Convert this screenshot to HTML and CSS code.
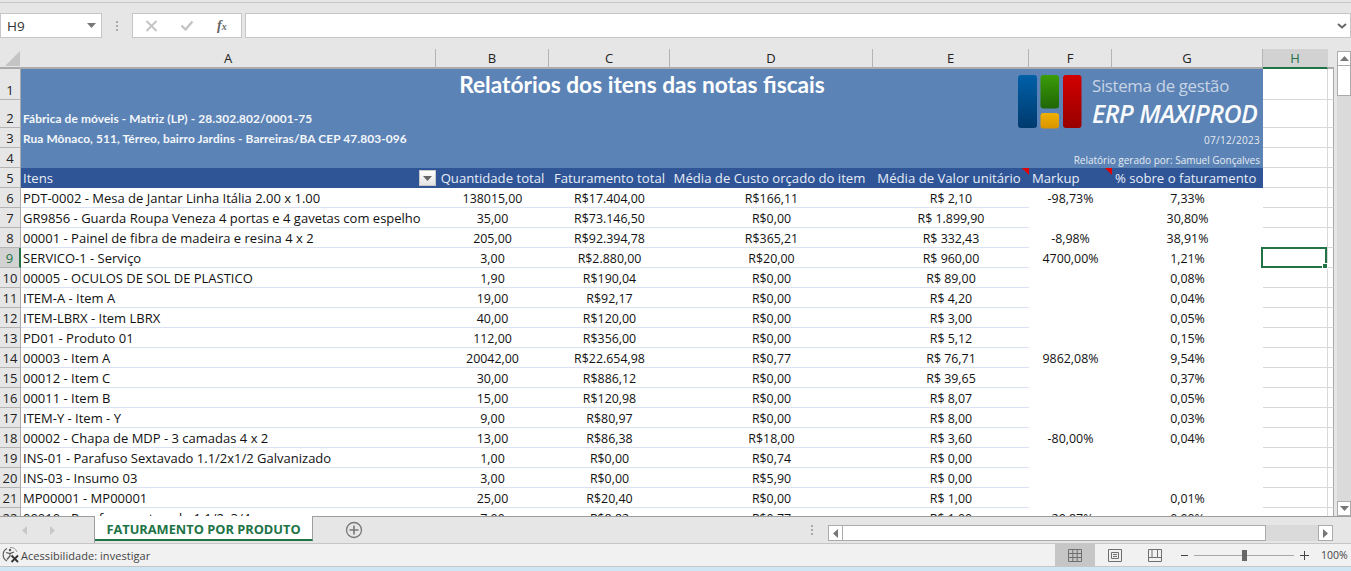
FILE: index.html
```html
<!DOCTYPE html>
<html lang="pt-BR">
<head>
<meta charset="utf-8">
<title>Relatórios dos itens das notas fiscais</title>
<link rel="stylesheet" href="styles.css">
</head>
<body>
<div class="app">
  <div class="ribbon-edge"></div>
  <div class="formula-bar">
    <div class="name-box"><span>H9</span><svg width="9" height="5" viewBox="0 0 9 5"><path d="M0 0h9L4.500 5z" fill="#777"/></svg></div>
    <div class="grip"><i></i><i></i><i></i></div>
    <div class="fx-box">
      <svg class="fx-x" width="13" height="12" viewBox="0 0 13 12"><path d="M1.500 1l10 10M11.500 1l-10 10" stroke="#c4c4c4" stroke-width="2" fill="none"/></svg>
      <svg class="fx-ok" width="14" height="11" viewBox="0 0 14 11"><path d="M1.500 5.500l4 4 7-8" stroke="#c4c4c4" stroke-width="2.400" fill="none"/></svg>
      <span class="fx-label">f<small>x</small></span>
    </div>
    <div class="formula-input"><svg width="10" height="6" viewBox="0 0 10 6"><path d="M1 1l4 3.500L9 1" stroke="#666" stroke-width="2" fill="none"/></svg></div>
  </div>

  <div class="sheet-row">
    <div class="grid-clip">
      <table class="grid">
        <colgroup>
          <col class="c-row"><col class="c-a"><col class="c-b"><col class="c-c"><col class="c-d"><col class="c-e"><col class="c-f"><col class="c-g"><col class="c-h"><col class="c-i">
        </colgroup>
        <thead>
          <tr class="r-head">
            <th class="corner"><svg width="18" height="18" viewBox="0 0 18 18"><path d="M17 2v15H2z" fill="#c4c4c4"/></svg></th>
            <th class="col">A</th><th class="col">B</th><th class="col">C</th><th class="col">D</th><th class="col">E</th><th class="col">F</th><th class="col">G</th><th class="col col-sel">H</th><th class="col col-i"></th>
          </tr>
        </thead>
        <tbody>
          <tr class="r1">
            <th class="row">1</th>
            <td class="banner title" colspan="7">Relatórios dos itens das notas fiscais
              <div class="logo">
                <svg width="64" height="54" viewBox="0 0 64 54">
                  <defs>
                    <linearGradient id="gb" x1="0" y1="0" x2="0" y2="1"><stop offset="0" stop-color="#0060a8"/><stop offset="1" stop-color="#003a6e"/></linearGradient>
                    <linearGradient id="gg" x1="0" y1="0" x2="0" y2="1"><stop offset="0" stop-color="#3c9c08"/><stop offset="1" stop-color="#1f6606"/></linearGradient>
                    <linearGradient id="gy" x1="0" y1="0" x2="0" y2="1"><stop offset="0" stop-color="#f0b000"/><stop offset="1" stop-color="#d89400"/></linearGradient>
                    <linearGradient id="gr" x1="0" y1="0" x2="0" y2="1"><stop offset="0" stop-color="#d20000"/><stop offset="1" stop-color="#980000"/></linearGradient>
                  </defs>
                  <rect x="0" y="0" width="19" height="53" rx="3" fill="url(#gb)"/>
                  <rect x="22.500" y="0" width="18.500" height="33.500" rx="3" fill="url(#gg)"/>
                  <rect x="22.500" y="38" width="18.500" height="15.500" rx="3" fill="url(#gy)"/>
                  <rect x="45" y="0" width="18.500" height="53" rx="3" fill="url(#gr)"/>
                </svg>
                <div class="logo-text"><span class="logo-top">Sistema de gestão</span><span class="logo-main">ERP MAXIPROD</span></div>
              </div>
            </td>
            <td class="h"></td><td class="i"></td>
          </tr>
          <tr class="r2">
            <th class="row">2</th>
            <td class="banner company" colspan="7">Fábrica de móveis - Matriz (LP) - 28.302.802/0001-75</td>
            <td class="h"></td><td class="i"></td>
          </tr>
          <tr class="r">
            <th class="row">3</th>
            <td class="banner company" colspan="5">Rua Mônaco, 511, Térreo, bairro Jardins - Barreiras/BA CEP 47.803-096</td>
            <td class="banner small date" colspan="2">07/12/2023</td>
            <td class="h"></td><td class="i"></td>
          </tr>
          <tr class="r">
            <th class="row">4</th>
            <td class="banner" colspan="5"></td>
            <td class="banner small" colspan="2">Relatório gerado por: Samuel Gonçalves</td>
            <td class="h"></td><td class="i"></td>
          </tr>
          <tr class="r">
            <th class="row">5</th>
            <td class="hd hd-a">Itens<span class="filter"><svg width="9" height="5" viewBox="0 0 9 5"><path d="M0 0h9L4.500 5z" fill="#666"/></svg></span></td>
            <td class="hd">Quantidade total</td>
            <td class="hd">Faturamento total</td>
            <td class="hd hd-off">Média de Custo orçado do item</td>
            <td class="hd hd-off">Média de Valor unitário<i class="note"></i></td>
            <td class="hd hd-l">Markup<i class="note"></i></td>
            <td class="hd hd-l">% sobre o faturamento</td>
            <td class="h"></td><td class="i"></td>
          </tr>
          <tr class="r"><th class="row">6</th><td class="t">PDT-0002 - Mesa de Jantar Linha Itália 2.00 x 1.00</td><td class="n">138015,00</td><td class="n">R$17.404,00</td><td class="n">R$166,11</td><td class="n">R$ 2,10</td><td class="p">-98,73%</td><td class="p">7,33%</td><td class="h"></td><td class="i"></td></tr>
          <tr class="r"><th class="row">7</th><td class="t">GR9856 - Guarda Roupa Veneza 4 portas e 4 gavetas com espelho</td><td class="n">35,00</td><td class="n">R$73.146,50</td><td class="n">R$0,00</td><td class="n">R$ 1.899,90</td><td class="p"></td><td class="p">30,80%</td><td class="h"></td><td class="i"></td></tr>
          <tr class="r"><th class="row">8</th><td class="t">00001 - Painel de fibra de madeira e resina 4 x 2</td><td class="n">205,00</td><td class="n">R$92.394,78</td><td class="n">R$365,21</td><td class="n">R$ 332,43</td><td class="p">-8,98%</td><td class="p">38,91%</td><td class="h"></td><td class="i"></td></tr>
          <tr class="r"><th class="row row-sel">9</th><td class="t">SERVICO-1 - Serviço</td><td class="n">3,00</td><td class="n">R$2.880,00</td><td class="n">R$20,00</td><td class="n">R$ 960,00</td><td class="p">4700,00%</td><td class="p">1,21%</td><td class="h active"><div class="selection"><i></i></div></td><td class="i"></td></tr>
          <tr class="r"><th class="row">10</th><td class="t">00005 - OCULOS DE SOL DE PLASTICO</td><td class="n">1,90</td><td class="n">R$190,04</td><td class="n">R$0,00</td><td class="n">R$ 89,00</td><td class="p"></td><td class="p">0,08%</td><td class="h"></td><td class="i"></td></tr>
          <tr class="r"><th class="row">11</th><td class="t">ITEM-A - Item A</td><td class="n">19,00</td><td class="n">R$92,17</td><td class="n">R$0,00</td><td class="n">R$ 4,20</td><td class="p"></td><td class="p">0,04%</td><td class="h"></td><td class="i"></td></tr>
          <tr class="r"><th class="row">12</th><td class="t">ITEM-LBRX - Item LBRX</td><td class="n">40,00</td><td class="n">R$120,00</td><td class="n">R$0,00</td><td class="n">R$ 3,00</td><td class="p"></td><td class="p">0,05%</td><td class="h"></td><td class="i"></td></tr>
          <tr class="r"><th class="row">13</th><td class="t">PD01 - Produto 01</td><td class="n">112,00</td><td class="n">R$356,00</td><td class="n">R$0,00</td><td class="n">R$ 5,12</td><td class="p"></td><td class="p">0,15%</td><td class="h"></td><td class="i"></td></tr>
          <tr class="r"><th class="row">14</th><td class="t">00003 - Item A</td><td class="n">20042,00</td><td class="n">R$22.654,98</td><td class="n">R$0,77</td><td class="n">R$ 76,71</td><td class="p">9862,08%</td><td class="p">9,54%</td><td class="h"></td><td class="i"></td></tr>
          <tr class="r"><th class="row">15</th><td class="t">00012 - Item C</td><td class="n">30,00</td><td class="n">R$886,12</td><td class="n">R$0,00</td><td class="n">R$ 39,65</td><td class="p"></td><td class="p">0,37%</td><td class="h"></td><td class="i"></td></tr>
          <tr class="r"><th class="row">16</th><td class="t">00011 - Item B</td><td class="n">15,00</td><td class="n">R$120,98</td><td class="n">R$0,00</td><td class="n">R$ 8,07</td><td class="p"></td><td class="p">0,05%</td><td class="h"></td><td class="i"></td></tr>
          <tr class="r"><th class="row">17</th><td class="t">ITEM-Y - Item - Y</td><td class="n">9,00</td><td class="n">R$80,97</td><td class="n">R$0,00</td><td class="n">R$ 8,00</td><td class="p"></td><td class="p">0,03%</td><td class="h"></td><td class="i"></td></tr>
          <tr class="r"><th class="row">18</th><td class="t">00002 - Chapa de MDP - 3 camadas 4 x 2</td><td class="n">13,00</td><td class="n">R$86,38</td><td class="n">R$18,00</td><td class="n">R$ 3,60</td><td class="p">-80,00%</td><td class="p">0,04%</td><td class="h"></td><td class="i"></td></tr>
          <tr class="r"><th class="row">19</th><td class="t">INS-01 - Parafuso Sextavado 1.1/2x1/2 Galvanizado</td><td class="n">1,00</td><td class="n">R$0,00</td><td class="n">R$0,74</td><td class="n">R$ 0,00</td><td class="p"></td><td class="p"></td><td class="h"></td><td class="i"></td></tr>
          <tr class="r"><th class="row">20</th><td class="t">INS-03 - Insumo 03</td><td class="n">3,00</td><td class="n">R$0,00</td><td class="n">R$5,90</td><td class="n">R$ 0,00</td><td class="p"></td><td class="p"></td><td class="h"></td><td class="i"></td></tr>
          <tr class="r"><th class="row">21</th><td class="t">MP00001 - MP00001</td><td class="n">25,00</td><td class="n">R$20,40</td><td class="n">R$0,00</td><td class="n">R$ 1,00</td><td class="p"></td><td class="p">0,01%</td><td class="h"></td><td class="i"></td></tr>
          <tr class="r"><th class="row">22</th><td class="t">00010 - Parafuso sextavado 1.1/2x3/4</td><td class="n">7,00</td><td class="n">R$8,82</td><td class="n">R$0,77</td><td class="n">R$ 1,00</td><td class="p">-29,87%</td><td class="p">0,00%</td><td class="h"></td><td class="i"></td></tr>
        </tbody>
      </table>
    </div>
    <div class="vscroll">
      <div class="vbtn"><svg width="9" height="5" viewBox="0 0 9 5"><path d="M4.500 0L9 5H0z" fill="#777"/></svg></div>
      <div class="vthumb"></div>
      <div class="vtrack"></div>
      <div class="vbtn"><svg width="9" height="5" viewBox="0 0 9 5"><path d="M0 0h9L4.500 5z" fill="#777"/></svg></div>
    </div>
  </div>

  <div class="tabs">
    <div class="tab-nav">
      <svg width="5" height="9" viewBox="0 0 5 9"><path d="M5 0v9L0 4.500z" fill="#c8c8c8"/></svg>
      <svg width="5" height="9" viewBox="0 0 5 9"><path d="M0 0v9l5-4.500z" fill="#c8c8c8"/></svg>
    </div>
    <div class="tab">FATURAMENTO POR PRODUTO</div>
    <svg class="add" width="18" height="18" viewBox="0 0 18 18"><circle cx="9" cy="9" r="7.500" fill="none" stroke="#777" stroke-width="1.300"/><path d="M9 4.500v9M4.500 9h9" stroke="#777" stroke-width="1.600"/></svg>
    <div class="grip tab-grip"><i></i><i></i><i></i></div>
    <div class="hscroll">
      <div class="hbtn"><svg width="5" height="9" viewBox="0 0 5 9"><path d="M5 0v9L0 4.500z" fill="#777"/></svg></div>
      <div class="hthumb"></div>
      <div class="htrack"></div>
      <div class="hbtn"><svg width="5" height="9" viewBox="0 0 5 9"><path d="M0 0v9l5-4.500z" fill="#777"/></svg></div>
    </div>
  </div>

  <div class="status">
    <svg class="a11y" width="18" height="18" viewBox="0 0 18 18"><path d="M5 2.500A7 7 0 0 0 5 15" fill="none" stroke="#555" stroke-width="1.100"/><path d="M8 1.500A7 7 0 0 1 15 6" fill="none" stroke="#999" stroke-width="1"/><path d="M4 6.500l4 1 4-1.500M8 7.500v2.500l-3 3.500" fill="none" stroke="#555" stroke-width="1.200"/><circle cx="8" cy="4" r="1.200" fill="#555"/><path d="M9.500 9.500l6.500 6.500M16 9.500l-6.500 6.500" stroke="#333" stroke-width="1.800"/></svg>
    <span class="a11y-text">Acessibilidade: investigar</span>
    <div class="view active-view"><svg width="14" height="13" viewBox="0 0 14 13"><path d="M.5.500h13v12H.5zM.5 4.500h13M.5 8.500h13M4.800.500v12M9.200.500v12" fill="none" stroke="#6f6f6f"/></svg></div>
    <div class="view"><svg width="14" height="13" viewBox="0 0 14 13"><path d="M.5.500h13v12H.5z" fill="none" stroke="#6f6f6f"/><path d="M3.500 3.500h7v6h-7zM5 5.500h4M5 7.500h4" fill="none" stroke="#6f6f6f"/></svg></div>
    <div class="view"><svg width="14" height="13" viewBox="0 0 14 13"><path d="M.5.500h13v12H.5zM.5 8.500h3.500V.500M9.500.500v8h4M4 8.500h5.500" fill="none" stroke="#6f6f6f"/></svg></div>
    <div class="zoom">
      <span class="zoom-minus"></span>
      <div class="slider"><span class="knob"></span></div>
      <span class="zoom-plus"></span>
    </div>
    <span class="pct">100%</span>
  </div>
  <div class="desktop-strip"></div>
</div>
</body>
</html>
```
FILE: styles.css
```css
* { box-sizing: border-box; }
html, body { margin: 0; padding: 0; }
body { background: #e6e6e6; overflow: hidden; }
.app { width: 1351px; height: 571px; display: flex; flex-direction: column; background: #e6e6e6; font-family: "Open Sans", "Lato", sans-serif; color: #1a1a1a; overflow: hidden; }

.ribbon-edge { height: 3px; border-bottom: 1px solid #c6c6c6; flex: none; }

.formula-bar { flex: none; height: 46px; padding-top: 10px; padding-bottom: 11px; display: flex; align-items: stretch; }
.name-box { width: 102px; background: #fff; border: 1px solid #c6c6c6; display: flex; align-items: center; justify-content: space-between; padding: 0 5px 0 6px; font: 13.500px "Open Sans", sans-serif; color: #333; }
.grip { display: flex; flex-direction: column; gap: 2px; justify-content: center; }
.grip i { display: block; width: 2px; height: 2px; background: #aaa; }
.formula-bar .grip { width: 30px; align-items: center; }
.fx-box { width: 110px; background: #fff; border: 1px solid #c6c6c6; display: flex; align-items: center; position: relative; }
.fx-x { margin-left: 12px; }
.fx-ok { margin-left: 22px; }
.fx-label { margin-left: 23px; font: italic 700 14px "Liberation Serif", serif; color: #666; }
.fx-label small { font-size: 10px; }
.formula-input { flex: 1; margin-left: 3px; background: #fff; border: 1px solid #c6c6c6; display: flex; align-items: center; justify-content: flex-end; padding-right: 3px; }

.sheet-row { flex: none; height: 467px; display: flex; }
.grid-clip { width: 1334px; height: 467px; overflow: hidden; background: #fff; }
.grid { table-layout: fixed; width: 1334px; border-collapse: separate; border-spacing: 0; font-family: "Open Sans", sans-serif; font-size: 12.400px; color: #111; }
.c-row { width: 21px; } .c-a { width: 415px; } .c-b { width: 113px; } .c-c { width: 121px; } .c-d { width: 203px; }
.c-e { width: 156px; } .c-f { width: 83px; } .c-g { width: 151px; } .c-h { width: 65px; } .c-i { width: 6px; }
th, td { padding: 0; font-weight: 400; white-space: nowrap; overflow: hidden; }

.r-head { height: 19px; }
.corner { background: #e6e6e6; border-bottom: 2px solid #ababab; padding: 0; vertical-align: bottom; line-height: 0; text-align: right; }
.col { background: #e6e6e6; border-bottom: 2px solid #ababab; border-right: 1px solid #b4b4b4; font: 13px "Open Sans", sans-serif; color: #222; text-align: center; height: 19px; line-height: 16px; }
.col-sel { background: #d2d2d2; color: #217346; border-bottom-color: #217346; border-right-color: #d2d2d2; }
.col-i { border-right: 0; }

.r1 { height: 31px; }
.r2 { height: 28px; }
.r { height: 20px; }
.row { background: #e6e6e6; border-right: 1px solid #ababab; border-bottom: 1px solid #b4b4b4; font: 13px "Open Sans", sans-serif; color: #222; text-align: center; vertical-align: bottom; line-height: 17px; }
.row-sel { background: #d2d2d2; color: #217346; border-right: 2px solid #217346; }

.banner { background: #5b83b6; color: #fff; }
.title { position: relative; overflow: visible; text-align: center; font-family: "Lato", sans-serif; font-size: 22.700px; font-weight: 700; vertical-align: top; padding-top: 2px; line-height: 28px; }
.company { font-family: "Lato", sans-serif; font-size: 11.900px; font-weight: 700; padding-left: 2px; vertical-align: bottom; line-height: 18px; letter-spacing: .1px; color: #f4f7fb; }
.small { text-align: right; font: 10px/16px "Open Sans", sans-serif; color: #e6ebf2; padding-right: 3px; vertical-align: bottom; }
.date { letter-spacing: .3px; }

.logo { position: absolute; left: 997px; top: 6px; display: flex; text-align: left; }
.logo-text { margin-left: 10px; display: flex; flex-direction: column; font-family: "Open Sans", sans-serif; }
.logo-top { font-size: 16.800px; font-weight: 400; line-height: 21px; color: #c8d4e4; letter-spacing: -.3px; }
.logo-main { font-size: 25px; font-weight: 600; font-style: italic; line-height: 35px; color: #f8fafc; letter-spacing: -.5px; }

.hd { position: relative; background: #2f5597; color: #e8edf6; text-align: center; font-size: 13.150px; }
.hd-off { padding-right: 4px; }
.hd-a, .hd-l { text-align: left; padding-left: 2px; }
.hd-l { padding-left: 3px; }
.filter { position: absolute; right: 0; top: 2px; width: 17px; height: 16px; background: linear-gradient(#fff, #e4e4e4); border: 1px solid #c8c8c8; display: flex; align-items: center; justify-content: center; }
.note { position: absolute; right: 0; top: 0; width: 0; height: 0; border-top: 7px solid #e00000; border-left: 7px solid transparent; }

.t, .n { border-bottom: 1px solid #d9e1f2; padding-top: 1px; }
.t { padding-left: 2px; font-size: 13px; }
.n, .p { text-align: center; }
.h { border-right: 1px solid #d8d8d8; border-bottom: 1px solid #d8d8d8; background: #fff; }
.i { border-right: 1px solid #a8a8a8; border-bottom: 1px solid #d8d8d8; background: #fff; }
.active { position: relative; overflow: visible; }
.selection { position: absolute; left: -2px; top: -1px; right: 0; bottom: -1px; border: 2px solid #217346; }
.selection i { position: absolute; right: -3px; bottom: -3px; width: 6px; height: 6px; background: #217346; border: 1px solid #fff; }

.vscroll { width: 17px; padding-left: 3px; padding-top: 2px; display: flex; flex-direction: column; background: #e6e6e6; }
.vbtn { flex: none; height: 15px; background: #fff; border: 1px solid #ababab; display: flex; align-items: center; justify-content: center; }
.vthumb { flex: none; height: 30px; background: #fff; border: 1px solid #ababab; border-top: 0; }
.vtrack { flex: 1; background: #dadada; }

.tabs { flex: none; height: 28px; border-top: 1px solid #9e9e9e; border-bottom: 1px solid #c6c6c6; display: flex; align-items: flex-start; }
.tab-nav { width: 95px; height: 26px; display: flex; align-items: center; gap: 23px; padding-left: 22px; border-right: 1px solid #9e9e9e; }
.tab { width: 218px; height: 25px; margin-top: -1px; padding-top: 1px; background: #fff; border-right: 1px solid #9e9e9e; border-bottom: 2px solid #217346; color: #217346; font-family: "Open Sans", sans-serif; font-size: 12.800px; font-weight: 700; text-align: center; line-height: 24px; }
.add { margin: 4px 0 0 32px; }
.tab-grip { margin: 6px 0 0 448px; width: 4px; height: 14px; }
.hscroll { margin: 8px 0 0 13px; width: 505px; height: 16px; display: flex; }
.hbtn { flex: none; width: 15px; height: 16px; background: #fff; border: 1px solid #ababab; display: flex; align-items: center; justify-content: center; }
.hthumb { flex: none; width: 423px; background: #fff; border: 1px solid #ababab; border-left: 0; }
.htrack { flex: 1; background: #dadada; }

.status { flex: none; height: 22px; background: #f1f1f1; display: flex; align-items: center; font: 11px "Open Sans", sans-serif; color: #444; }
.a11y { margin-left: 2px; }
.a11y-text { margin-left: 1px; width: 1034px; letter-spacing: .05px; }
.view { width: 40px; height: 22px; display: flex; align-items: center; justify-content: center; }
.active-view { background: #c6c6c6; }
.zoom { margin-left: 6px; display: flex; align-items: center; }
.zoom-minus { width: 7px; height: 1px; background: #444; }
.slider { position: relative; width: 100px; height: 1px; margin: 0 6px; background: #a8a8a8; }
.knob { position: absolute; left: 48px; top: -5px; width: 5px; height: 11px; background: #666; }
.zoom-plus { width: 9px; height: 9px; background: linear-gradient(#444, #444) center / 9px 1px no-repeat, linear-gradient(#444, #444) center / 1px 9px no-repeat; }
.pct { margin-left: 12px; font-size: 10.500px; }
.desktop-strip { flex: 1; background: #cfe6f4; border-top: 1px solid #c6c6c6; }
```
